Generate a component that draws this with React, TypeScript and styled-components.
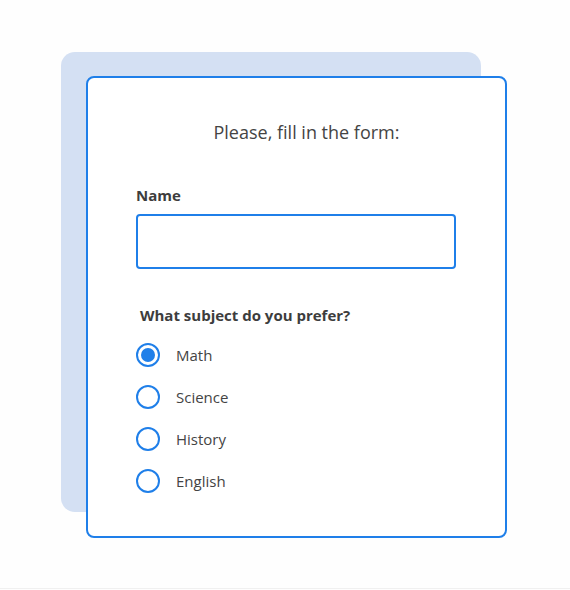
import styled, { createGlobalStyle } from "styled-components"

const GlobalStyle = createGlobalStyle`
  html, body {
    margin: 0;
    padding: 0;
    background: #fefefe;
    font-family: "Open Sans", "Liberation Sans", sans-serif;
  }
`

const subjects = ["Math", "Science", "History", "English"]

const App = () => {
  return (
    <Page>
      <GlobalStyle />
      <Backdrop>
        <Card>
          <Title>Please, fill in the form:</Title>
          <Label htmlFor="name">Name</Label>
          <Input id="name" type="text" />
          <Question>What subject do you prefer?</Question>
          <Options>
            {subjects.map((s) => (
              <Option key={s}>
                <Radio $checked={s === "Math"} />
                <span>{s}</span>
              </Option>
            ))}
          </Options>
        </Card>
      </Backdrop>
    </Page>
  )
}

export default App

const Page = styled.div`
  width: 570px;
  height: 589px;
  border-bottom: 1px solid #f0f0f0;
  padding: 52px 0 0 61px;
  box-sizing: border-box;
`
const Backdrop = styled.div`
  width: 420px;
  height: 460px;
  background: #d4e0f3;
  border-radius: 14px;
  padding: 24px 0 0 25px;
  box-sizing: border-box;
`
const Card = styled.div`
  width: 421px;
  height: 462px;
  box-sizing: border-box;
  background: #fff;
  border: 2px solid #1f7fe9;
  border-radius: 8px;
  padding: 41px 48px 0 48px;
  display: flex;
  flex-direction: column;
  align-items: flex-start;
`
const Title = styled.h2`
  margin: 0 0 40px 0;
  align-self: stretch;
  text-align: center;
  padding-left: 20px;
  font-size: 18px;
  font-weight: 400;
  color: #444;
  line-height: 26px;
`
const Label = styled.label`
  font-size: 15px;
  font-weight: 700;
  color: #3d3d3d;
  line-height: 20px;
  margin-bottom: 9px;
`
const Input = styled.input`
  width: 320px;
  height: 55px;
  box-sizing: border-box;
  border: 2px solid #1f7fe9;
  border-radius: 4px;
  outline: none;
  font: inherit;
`
const Question = styled.p`
  margin: 36px 0 0 4px;
  font-size: 15px;
  font-weight: 700;
  color: #3d3d3d;
  line-height: 20px;
`
const Options = styled.div`
  display: flex;
  flex-direction: column;
  gap: 18px;
  margin-top: 18px;
`
const Option = styled.label`
  display: flex;
  align-items: center;
  gap: 16px;
  font-size: 15px;
  color: #444;
  line-height: 24px;
`
const Radio = styled.span<{ $checked?: boolean }>`
  width: 24px;
  height: 24px;
  box-sizing: border-box;
  border: 2px solid #1f7fe9;
  border-radius: 50%;
  display: flex;
  align-items: center;
  justify-content: center;
  &::after {
    content: "";
    display: ${(p) => (p.$checked ? "block" : "none")};
    width: 14px;
    height: 14px;
    border-radius: 50%;
    background: #1f7fe9;
  }
`
